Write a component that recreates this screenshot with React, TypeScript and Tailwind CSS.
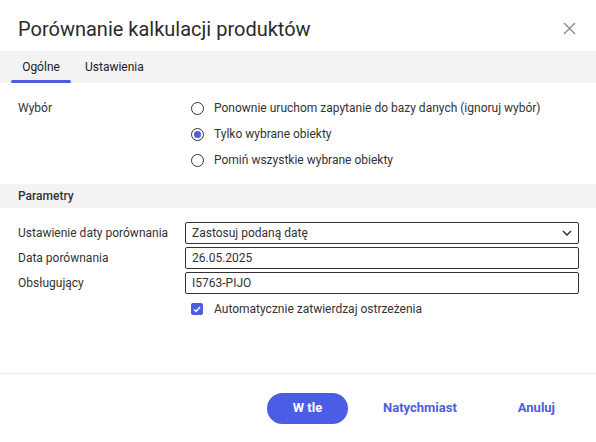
import React, { useState } from 'react';

const OPTIONS = [
  'Ponownie uruchom zapytanie do bazy danych (ignoruj wybór)',
  'Tylko wybrane obiekty',
  'Pomiń wszystkie wybrane obiekty',
];

function Radio({ checked }: { checked: boolean }) {
  return (
    <span className="w-[13px] h-[13px] rounded-full border border-[#333] flex items-center justify-center shrink-0">
      {checked && <span className="w-[7px] h-[7px] rounded-full bg-[#4b5de4]" />}
    </span>
  );
}

function Field({ label, children }: { label: string; children: React.ReactNode }) {
  return (
    <div className="flex items-center h-[22px]">
      <div className="w-[167px] shrink-0 text-[12px] text-[#333]">{label}</div>
      {children}
    </div>
  );
}

export default function App() {
  const [choice, setChoice] = useState(1);

  return (
    <div className="w-[596px] h-[442px] bg-white flex flex-col text-[#333]" style={{ fontFamily: 'Roboto, "Noto Sans", sans-serif' }}>
      <header className="h-[51px] shrink-0 flex items-center pl-[18px] pr-[20px] pt-[6px]">
        <h1 className="text-[20px] text-[#2b2b2b]">Porównanie kalkulacji produktów</h1>
        <button className="ml-auto text-[#8a8a8a]" aria-label="Zamknij">
          <svg width="13" height="13" viewBox="0 0 13 13" fill="none" stroke="currentColor" strokeWidth="1.4">
            <path d="M1 1l11 11M12 1L1 12" />
          </svg>
        </button>
      </header>

      <nav className="h-[32px] shrink-0 bg-[#f3f3f3] flex items-stretch pl-[11px] text-[12px]">
        <div className="relative w-[60px] flex items-center justify-center text-[#222]">
          Ogólne
          <span className="absolute left-0 right-0 bottom-0 h-[3px] bg-[#4b5de4] rounded-full" />
        </div>
        <div className="flex items-center pl-[14px] text-[#222]">Ustawienia</div>
      </nav>

      <section className="flex pt-[12px] pb-[11px]">
        <div className="w-[191px] shrink-0 pl-[18px] text-[12px] h-[26px] flex items-center">Wybór</div>
        <div className="flex flex-col">
          {OPTIONS.map((o, i) => (
            <label key={o} className="h-[26px] flex items-center gap-[10px] text-[12px] cursor-pointer" onClick={() => setChoice(i)}>
              <Radio checked={choice === i} />
              <span>{o}</span>
            </label>
          ))}
        </div>
      </section>

      <div className="h-[24px] shrink-0 bg-[#f3f3f3] flex items-center pl-[18px] text-[12px] font-medium">Parametry</div>

      <section className="flex flex-col gap-[3px] pt-[14px] pl-[18px] pr-[17px]">
        <Field label="Ustawienie daty porównania">
          <div className="flex-1 h-[22px] border border-[#333] rounded-[2px] flex items-center pl-[6px] pr-[6px] text-[12px]">
            <span>Zastosuj podaną datę</span>
            <svg className="ml-auto" width="10" height="6" viewBox="0 0 10 6" fill="none" stroke="#333" strokeWidth="1.5">
              <path d="M1 1l4 4 4-4" />
            </svg>
          </div>
        </Field>
        <Field label="Data porównania">
          <div className="flex-1 h-[22px] border border-[#333] rounded-[2px] flex items-center pl-[6px] text-[12px]">26.05.2025</div>
        </Field>
        <Field label="Obsługujący">
          <div className="flex-1 h-[22px] border border-[#333] rounded-[2px] flex items-center pl-[6px] text-[12px]">I5763-PIJO</div>
        </Field>
        <div className="h-[24px] flex items-center pl-[173px] gap-[11px] text-[12px]">
          <span className="w-[12px] h-[12px] rounded-[2px] bg-[#4b5de4] flex items-center justify-center">
            <svg width="8" height="7" viewBox="0 0 8 7" fill="none" stroke="white" strokeWidth="1.5">
              <path d="M1 3.5l2 2L7 1" />
            </svg>
          </span>
          <span>Automatycznie zatwierdzaj ostrzeżenia</span>
        </div>
      </section>

      <footer className="mt-auto h-[69px] shrink-0 border-t border-[#ececec] flex items-center pl-[267px] text-[13px] font-bold">
        <button className="w-[81px] h-[31px] rounded-full bg-[#4b5de4] text-white">W tle</button>
        <button className="ml-[35px] text-[#4b5de4]">Natychmiast</button>
        <button className="ml-[61px] text-[#4b5de4]">Anuluj</button>
      </footer>
    </div>
  );
}
